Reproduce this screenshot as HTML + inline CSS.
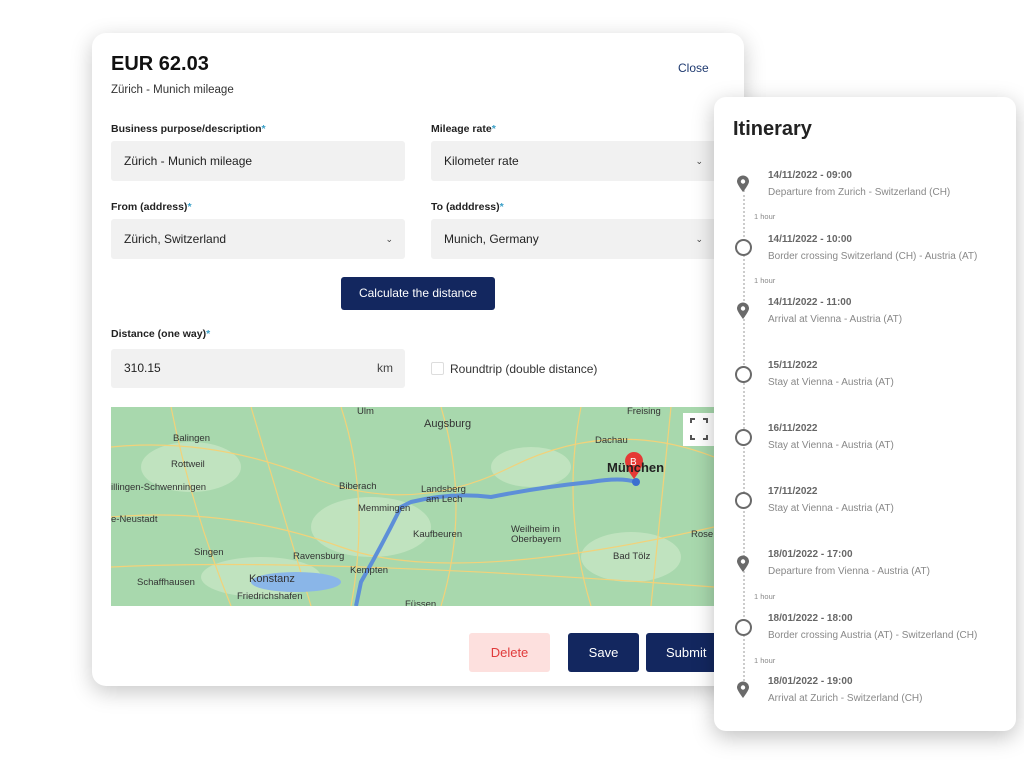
<!DOCTYPE html>
<html><head><meta charset="utf-8"><style>
*{margin:0;padding:0;box-sizing:border-box}
body{width:1024px;height:768px;background:#fff;position:relative;overflow:hidden;font-family:"Liberation Sans",sans-serif;color:#1b1b1b}
.a{position:absolute}
.card{left:92px;top:33px;width:652px;height:653px;background:#fff;border-radius:14px;box-shadow:0 6px 22px rgba(0,0,0,.22)}
.lbl{font-size:10.5px;font-weight:bold;color:#222}
.lbl i{color:#3aa0c8;font-style:normal}
.fld{background:#f1f1f1;border-radius:3px;height:40px;font-size:12px;color:#222;padding-left:13px;line-height:40px}
.chev{position:absolute;right:12px;top:0;font-size:9px;color:#444}
.btn{border-radius:3px;font-size:13px;text-align:center;color:#fff;background:#13275f}
.it{left:714px;top:97px;width:302px;height:634px;background:#fff;border-radius:12px;box-shadow:0 6px 22px rgba(0,0,0,.25)}
.t{left:768px;font-size:10px;font-weight:bold;color:#666}
.d{left:768px;font-size:10px;color:#888}
.h{left:754px;font-size:7.5px;color:#888}
.circ{left:735px;width:17px;height:17px;border:2px solid #6a6a6a;border-radius:50%}
</style></head><body>
<div class="a card"></div>
<div class="a" style="left:111px;top:53px;font-size:20px;font-weight:bold;color:#111">EUR 62.03</div>
<div class="a" style="left:678px;top:61px;font-size:12px;color:#1f3a70">Close</div>
<div class="a" style="left:111px;top:84px;font-size:11.5px;color:#333">Zürich - Munich mileage</div>

<div class="a lbl" style="left:111px;top:123px">Business purpose/description<i>*</i></div>
<div class="a lbl" style="left:431px;top:123px">Mileage rate<i>*</i></div>
<div class="a fld" style="left:111px;top:141px;width:294px">Zürich - Munich mileage</div>
<div class="a fld" style="left:431px;top:141px;width:290px">Kilometer rate<span class="chev" style="right:18px">⌄</span></div>
<div class="a lbl" style="left:111px;top:201px">From (address)<i>*</i></div>
<div class="a lbl" style="left:431px;top:201px">To (adddress)<i>*</i></div>
<div class="a fld" style="left:111px;top:219px;width:294px">Zürich, Switzerland<span class="chev">⌄</span></div>
<div class="a fld" style="left:431px;top:219px;width:290px">Munich, Germany<span class="chev" style="right:18px">⌄</span></div>
<div class="a btn" style="left:341px;top:277px;width:154px;height:33px;line-height:33px;font-size:12px">Calculate the distance</div>
<div class="a lbl" style="left:111px;top:328px">Distance (one way)<i>*</i></div>
<div class="a fld" style="left:111px;top:349px;width:294px;height:39px;line-height:39px">310.15<span class="chev" style="font-size:12px">km</span></div>
<div class="a" style="left:431px;top:362px;width:13px;height:13px;border:1px solid #ddd;border-radius:2px"></div>
<div class="a" style="left:450px;top:362px;font-size:12px;color:#333">Roundtrip (double distance)</div>

<svg class="a" style="left:111px;top:407px" width="603" height="199" viewBox="0 0 603 199">
<rect width="603" height="199" fill="#a8d8ad"/>
<g fill="#c6e6c3" opacity=".8"><ellipse cx="80" cy="60" rx="50" ry="25"/><ellipse cx="260" cy="120" rx="60" ry="30"/><ellipse cx="420" cy="60" rx="40" ry="20"/><ellipse cx="520" cy="150" rx="50" ry="25"/><ellipse cx="150" cy="170" rx="60" ry="20"/></g>
<g stroke="#f2d27a" stroke-width="1.2" fill="none">
<path d="M0 40 Q100 30 200 70 T400 60 603 50"/><path d="M0 110 Q120 100 230 140 T603 120"/><path d="M60 0 Q80 100 120 199"/><path d="M230 0 Q260 90 240 199"/><path d="M330 0 Q360 100 330 199"/><path d="M470 0 Q450 100 480 199"/><path d="M0 160 Q200 150 603 180"/><path d="M140 0 L200 199"/><path d="M560 0 L540 199"/>
</g>
<ellipse cx="185" cy="175" rx="45" ry="10" fill="#8ab6e8"/>
<path d="M245 199 L250 175 Q270 140 290 100 L300 95 Q340 85 380 90 Q430 80 480 75 Q510 70 525 75" stroke="#5d8fd8" stroke-width="4" fill="none"/>
<circle cx="525" cy="75" r="4" fill="#3b6fd0"/>
<path d="M523 72 Q514 60 514 54 a9 9 0 0 1 18 0 Q532 60 523 72Z" fill="#e53935"/>
<text x="519" y="58" font-size="10" fill="#fff" font-family="Liberation Sans">B</text>
<g font-family="Liberation Sans" font-size="9.5" fill="#333">
<text x="62" y="34">Balingen</text><text x="60" y="60">Rottweil</text><text x="0" y="83">illingen-Schwenningen</text><text x="0" y="115">e-Neustadt</text><text x="83" y="148">Singen</text><text x="138" y="114" font-size="13" font-weight="bold" fill="#222" x2="0"> </text>
<text x="26" y="178">Schaffhausen</text><text x="138" y="175" font-size="11">Konstanz</text><text x="126" y="192">Friedrichshafen</text>
<text x="182" y="152">Ravensburg</text><text x="228" y="82">Biberach</text><text x="247" y="104">Memmingen</text><text x="246" y="7">Ulm</text>
<text x="313" y="20" font-size="11">Augsburg</text><text x="302" y="130">Kaufbeuren</text><text x="239" y="166">Kempten</text><text x="294" y="200">Füssen</text>
<text x="310" y="85">Landsberg</text><text x="315" y="95">am Lech</text><text x="400" y="125">Weilheim in</text><text x="400" y="135">Oberbayern</text>
<text x="484" y="36">Dachau</text><text x="496" y="65" font-size="13" font-weight="bold" fill="#222">München</text><text x="502" y="152">Bad Tölz</text><text x="580" y="130">Rose</text><text x="516" y="7">Freising</text>
</g>
<rect x="572" y="6" width="31" height="33" fill="#fff"/>
<path d="M580 16v-4h4M592 12h4v4M596 28v4h-4M584 32h-4v-4" stroke="#555" stroke-width="2" fill="none"/>
</svg>

<div class="a btn" style="left:469px;top:633px;width:81px;height:39px;line-height:39px;background:#fde0de;color:#e03b3b">Delete</div>
<div class="a btn" style="left:568px;top:633px;width:71px;height:39px;line-height:39px">Save</div>
<div class="a btn" style="left:646px;top:633px;width:80px;height:39px;line-height:39px;text-align:left;padding-left:20px">Submit</div>

<div class="a it"></div>
<div class="a" style="left:733px;top:118px;font-size:20px;font-weight:bold;color:#222">Itinerary</div>
<div class="a" style="left:743px;top:190px;height:495px;border-left:2px dotted #ccc"></div>

<svg class="a" style="left:736px;top:175px" width="14" height="18" viewBox="0 0 14 18"><path d="M7 17 Q1 9 1 6.5a6 6 0 0 1 12 0Q13 9 7 17Z" fill="#6a6a6a"/><circle cx="7" cy="6.5" r="2.2" fill="#fff"/></svg>
<div class="a t" style="top:170px">14/11/2022 - 09:00</div><div class="a d" style="top:187px">Departure from Zurich - Switzerland (CH)</div>
<div class="a h" style="top:212px">1 hour</div>
<div class="a circ" style="top:239px;background:#fff"></div>
<div class="a t" style="top:234px">14/11/2022 - 10:00</div><div class="a d" style="top:251px">Border crossing Switzerland (CH) - Austria (AT)</div>
<div class="a h" style="top:276px">1 hour</div>
<svg class="a" style="left:736px;top:302px" width="14" height="18" viewBox="0 0 14 18"><path d="M7 17 Q1 9 1 6.5a6 6 0 0 1 12 0Q13 9 7 17Z" fill="#6a6a6a"/><circle cx="7" cy="6.5" r="2.2" fill="#fff"/></svg>
<div class="a t" style="top:297px">14/11/2022 - 11:00</div><div class="a d" style="top:314px">Arrival at Vienna - Austria (AT)</div>
<div class="a circ" style="top:366px;background:#fff"></div>
<div class="a t" style="top:360px">15/11/2022</div><div class="a d" style="top:377px">Stay at Vienna - Austria (AT)</div>
<div class="a circ" style="top:429px;background:#fff"></div>
<div class="a t" style="top:423px">16/11/2022</div><div class="a d" style="top:440px">Stay at Vienna - Austria (AT)</div>
<div class="a circ" style="top:492px;background:#fff"></div>
<div class="a t" style="top:486px">17/11/2022</div><div class="a d" style="top:503px">Stay at Vienna - Austria (AT)</div>
<svg class="a" style="left:736px;top:555px" width="14" height="18" viewBox="0 0 14 18"><path d="M7 17 Q1 9 1 6.5a6 6 0 0 1 12 0Q13 9 7 17Z" fill="#6a6a6a"/><circle cx="7" cy="6.5" r="2.2" fill="#fff"/></svg>
<div class="a t" style="top:549px">18/01/2022 - 17:00</div><div class="a d" style="top:566px">Departure from Vienna - Austria (AT)</div>
<div class="a h" style="top:592px">1 hour</div>
<div class="a circ" style="top:619px;background:#fff"></div>
<div class="a t" style="top:613px">18/01/2022 - 18:00</div><div class="a d" style="top:630px">Border crossing Austria (AT) - Switzerland (CH)</div>
<div class="a h" style="top:656px">1 hour</div>
<svg class="a" style="left:736px;top:681px" width="14" height="18" viewBox="0 0 14 18"><path d="M7 17 Q1 9 1 6.5a6 6 0 0 1 12 0Q13 9 7 17Z" fill="#6a6a6a"/><circle cx="7" cy="6.5" r="2.2" fill="#fff"/></svg>
<div class="a t" style="top:676px">18/01/2022 - 19:00</div><div class="a d" style="top:693px">Arrival at Zurich - Switzerland (CH)</div>
</body></html>
